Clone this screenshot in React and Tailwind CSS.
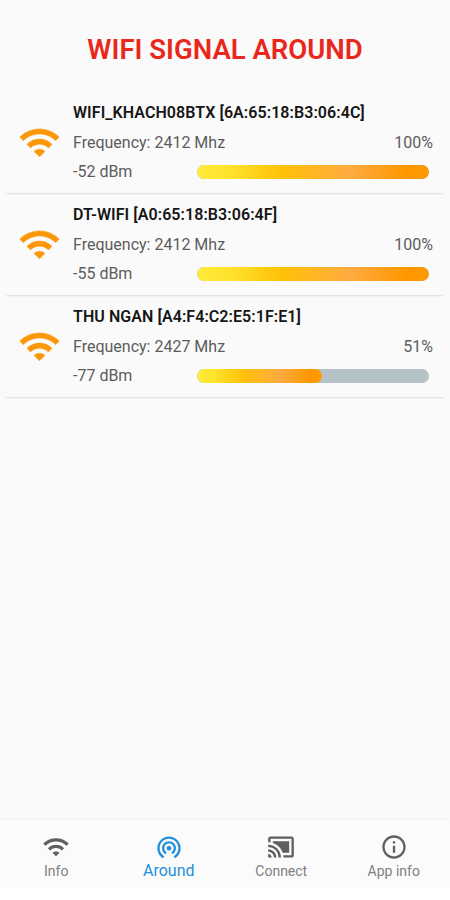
import React, { useState } from "react";
import {
  MdWifi,
  MdWifiTethering,
  MdCastConnected,
  MdInfoOutline,
} from "react-icons/md";

const networks = [
  { name: "WIFI_KHACH08BTX", mac: "6A:65:18:B3:06:4C", frequency: 2412, level: -52, percent: 100 },
  { name: "DT-WIFI", mac: "A0:65:18:B3:06:4F", frequency: 2412, level: -55, percent: 100 },
  { name: "THU NGAN", mac: "A4:F4:C2:E5:1F:E1", frequency: 2427, level: -77, percent: 51 },
];

const tabs = [
  { label: "Info", icon: MdWifi },
  { label: "Around", icon: MdWifiTethering },
  { label: "Connect", icon: MdCastConnected },
  { label: "App info", icon: MdInfoOutline },
];

// slightly heavier wifi mark for the list rows
function SignalIcon({ className }) {
  return (
    <svg
      viewBox="0 0 24 24"
      fill="currentColor"
      stroke="currentColor"
      strokeWidth="0.3"
      strokeLinejoin="round"
      className={className}
    >
      <path d="M1 9l2 2c4.97-4.97 13.03-4.97 18 0l2-2C16.93 2.93 7.08 2.93 1 9z" />
      <path d="M5 13l2 2c2.76-2.76 7.24-2.76 10 0l2-2C15.14 9.14 8.87 9.14 5 13z" />
      <path d="M9 17l3 3 3-3c-1.65-1.66-4.34-1.66-6 0z" />
    </svg>
  );
}

function NetworkRow({ network }) {
  return (
    <li className="flex h-[102px] rounded-[3px] pl-[13px] pr-[12px] shadow-[0_2px_2px_-1px_rgba(0,0,0,0.13)]">
      <div className="flex w-[55px] shrink-0 items-center">
        <SignalIcon className="h-[43px] w-[43px] text-[#fb9809]" />
      </div>

      <div className="flex-1 pt-[7px] text-base text-[#5c5c5c]">
        <h2 className="h-[30px] whitespace-nowrap leading-[30px] font-semibold tracking-[0.07px] text-[#161616]">
          {network.name} [{network.mac}]
        </h2>
        <div className="flex h-[30px] justify-between leading-[30px]">
          <span>Frequency: {network.frequency} Mhz</span>
          <span>{network.percent}%</span>
        </div>
        <div className="flex h-[28px] items-center justify-between pr-[4px] leading-[28px]">
          <span>{network.level} dBm</span>
          <div className="h-[14px] w-[232px] overflow-hidden rounded-full bg-[#b5c3c8]">
            <div
              className="h-full rounded-full bg-[linear-gradient(90deg,#ffeb3b_0%,#ffe32c_14%,#ffc107_37%,#ffab40_66%,#ff9800_90%)]"
              style={{ width: `${Math.min(100, network.percent + 3)}%` }}
            />
          </div>
        </div>
      </div>
    </li>
  );
}

export default function App() {
  const [active, setActive] = useState("Around");

  return (
    <div className="h-[900px] w-[450px] overflow-hidden bg-white font-['Roboto',sans-serif]">
      <div className="flex h-[888px] flex-col bg-[#fafafa]">
        <h1 className="h-[91px] pt-[30px] text-center text-[27.5px] leading-[39px] font-semibold text-[#e8281c]">
          WIFI SIGNAL AROUND
        </h1>

        <ul className="flex-1 px-[5px]">
          {networks.map((n) => (
            <NetworkRow key={n.mac} network={n} />
          ))}
        </ul>

        <nav className="grid h-[68px] grid-cols-4 bg-[#fbfbfb] shadow-[0_-1px_2px_rgba(0,0,0,0.03)]">
          {tabs.map(({ label, icon: Icon }) => (
            <button
              key={label}
              onClick={() => setActive(label)}
              className={
                active === label
                  ? "flex flex-col items-center pt-[13px] text-[16px] text-[#2290dc]"
                  : "flex flex-col items-center pt-[13px] text-[14px] text-[#808080]"
              }
            >
              <Icon
                className={
                  active === label ? "h-[28px] w-[28px]" : "h-[28px] w-[28px] text-[#5f5f5f]"
                }
              />
              <span className="leading-[20px]">{label}</span>
            </button>
          ))}
        </nav>
      </div>
    </div>
  );
}
